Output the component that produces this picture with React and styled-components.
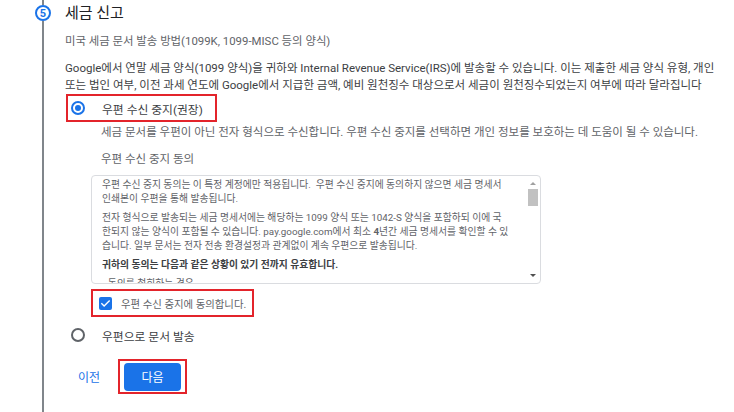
import styled, { createGlobalStyle } from "styled-components";

const GlobalStyle = createGlobalStyle`
  html, body {
    margin: 0;
    padding: 0;
    background: #ffffff;
  }
  body {
    font-family: Roboto, "Noto Sans CJK KR", sans-serif;
    color: #3c4043;
    overflow: hidden;
  }
`;

const Page = styled.div`
  display: flex;
  height: 412px;
`;

const Rail = styled.div`
  width: 16px;
  margin-left: 35px;
  display: flex;
  flex-direction: column;
  align-items: center;
`;

const RailLine = styled.div`
  width: 2px;
  background: #80868b;
  height: ${(p) => (p.$grow ? "auto" : "5px")};
  flex: ${(p) => (p.$grow ? 1 : "none")};
`;

const StepBadge = styled.div`
  width: 12px;
  height: 12px;
  border: 2px solid #1a73e8;
  border-radius: 50%;
  color: #1a73e8;
  font-size: 11px;
  font-weight: 700;
  display: flex;
  align-items: center;
  justify-content: center;
  line-height: 1;
`;

const Content = styled.div`
  margin-left: 14px;
  display: flex;
  flex-direction: column;
`;

const Title = styled.div`
  font-size: 15px;
  line-height: 20px;
  color: #202124;
  margin-top: 3px;
`;

const Subtitle = styled.div`
  font-size: 11.4px;
  line-height: 17px;
  color: #5f6368;
  margin-top: 10px;
`;

const Paragraph = styled.div`
  font-size: 11.5px;
  line-height: 17px;
  color: #3c4043;
  margin-top: 10px;
  white-space: nowrap;
`;

const OptionRow = styled.div`
  display: flex;
  align-items: center;
  width: fit-content;
  height: 24px;
  padding-right: 12px;
  margin-left: 1px;
  border: 2px solid ${(p) => (p.$marked ? "#e3242b" : "transparent")};
  margin-top: ${(p) => p.$top}px;
`;

const Radio = styled.span`
  box-sizing: border-box;
  width: 14px;
  height: 14px;
  border-radius: 50%;
  border: 2px solid ${(p) => (p.$on ? "#1a73e8" : "#5f6368")};
  margin-left: 3px;
  display: flex;
  align-items: center;
  justify-content: center;
  &::after {
    content: "";
    width: 6px;
    height: 6px;
    border-radius: 50%;
    background: ${(p) => (p.$on ? "#1a73e8" : "transparent")};
  }
`;

const OptionLabel = styled.span`
  font-size: 11.8px;
  color: #3c4043;
  margin-left: 17px;
`;

const Indented = styled.div`
  margin-left: 36px;
  display: flex;
  flex-direction: column;
`;

const Description = styled.div`
  font-size: 11.5px;
  line-height: 17px;
  color: #5f6368;
  margin-top: ${(p) => p.$top}px;
  white-space: nowrap;
`;

const ConsentBox = styled.div`
  margin-left: -10px;
  margin-top: 7px;
  width: 448px;
  height: 107px;
  border: 1px solid #dadce0;
  border-radius: 4px;
  display: flex;
  overflow: hidden;
`;

const ConsentText = styled.div`
  flex: 1;
  padding: 2px 10px 0 10px;
  font-size: 9.8px;
  line-height: 14px;
  color: #5f6368;
  overflow: hidden;
  white-space: nowrap;
`;

const ConsentPara = styled.p`
  margin: 0 0 5px 0;
  font-weight: ${(p) => (p.$bold ? 700 : 400)};
  color: ${(p) => (p.$bold ? "#3c4043" : "#5f6368")};
`;

const ScrollTrack = styled.div`
  width: 12px;
  margin: 3px 1px 2px 0;
  display: flex;
  flex-direction: column;
  align-items: center;
`;

const ScrollArrow = styled.div`
  width: 0;
  height: 0;
  border-left: 3px solid transparent;
  border-right: 3px solid transparent;
  ${(p) =>
    p.$up
      ? "border-bottom: 3px solid #a0a0a0; margin-top: 3px;"
      : "border-top: 3px solid #505050; margin-bottom: 4px;"}
`;

const ScrollThumb = styled.div`
  width: 10px;
  height: 17px;
  background: #c1c1c1;
  margin-top: 4px;
`;

const ScrollSpacer = styled.div`
  flex: 1;
`;

const CheckRow = styled.label`
  display: flex;
  align-items: center;
  width: fit-content;
  height: 24px;
  margin-left: -10px;
  margin-top: 5px;
  padding: 0 6px 0 6px;
  border: 2px solid #e3242b;
`;

const CheckBox = styled.span`
  width: 13px;
  height: 13px;
  border-radius: 2px;
  background: #1a73e8;
  display: flex;
  align-items: center;
  justify-content: center;
`;

const CheckLabel = styled.span`
  font-size: 10.4px;
  color: #5f6368;
  margin-left: 9px;
`;

const Actions = styled.div`
  display: flex;
  align-items: center;
  margin-top: 10px;
`;

const BackLink = styled.span`
  font-size: 12px;
  color: #1a73e8;
  margin-left: 13px;
`;

const Highlight = styled.div`
  border: 2px solid #e3242b;
  padding: 1.5px 4px;
  margin-left: 18px;
`;

const NextButton = styled.button`
  display: block;
  width: 57px;
  height: 28px;
  border: none;
  border-radius: 4px;
  background: #1a73e8;
  color: #ffffff;
  font-family: Roboto, "Noto Sans CJK KR", sans-serif;
  font-size: 12px;
  padding: 0;
  cursor: pointer;
`;

export default function App() {
  return (
    <>
      <GlobalStyle />
      <Page>
        <Rail>
          <RailLine />
          <StepBadge>5</StepBadge>
          <RailLine $grow />
        </Rail>
        <Content>
          <Title>세금 신고</Title>
          <Subtitle>미국 세금 문서 발송 방법(1099K, 1099-MISC 등의 양식)</Subtitle>
          <Paragraph>
            Google에서 연말 세금 양식(1099 양식)을 귀하와 Internal Revenue Service(IRS)에 발송할 수 있습니다. 이는 제출한 세금 양식 유형, 개인
            <br />
            또는 법인 여부, 이전 과세 연도에 Google에서 지급한 금액, 예비 원천징수 대상으로서 세금이 원천징수되었는지 여부에 따라 달라집니다
          </Paragraph>

          <OptionRow $marked $top={0}>
            <Radio $on />
            <OptionLabel>우편 수신 중지(권장)</OptionLabel>
          </OptionRow>

          <Indented>
            <Description $top={2}>
              세금 문서를 우편이 아닌 전자 형식으로 수신합니다. 우편 수신 중지를 선택하면 개인 정보를 보호하는 데 도움이 될 수 있습니다.
            </Description>
            <Description $top={10}>우편 수신 중지 동의</Description>

            <ConsentBox>
              <ConsentText>
                <ConsentPara>
                  우편 수신 중지 동의는 이 특정 계정에만 적용됩니다.&nbsp; 우편 수신 중지에 동의하지 않으면 세금 명세서
                  <br />
                  인쇄본이 우편을 통해 발송됩니다.
                </ConsentPara>
                <ConsentPara>
                  전자 형식으로 발송되는 세금 명세서에는 해당하는 1099 양식 또는 1042-S 양식을 포함하되 이에 국
                  <br />
                  한되지 않는 양식이 포함될 수 있습니다. pay.google.com에서 최소 <b>4</b>년간 세금 명세서를 확인할 수 있
                  <br />
                  습니다. 일부 문서는 전자 전송 환경설정과 관계없이 계속 우편으로 발송됩니다.
                </ConsentPara>
                <ConsentPara $bold>귀하의 동의는 다음과 같은 상황이 있기 전까지 유효합니다.</ConsentPara>
                <ConsentPara>• 동의를 철회하는 경우</ConsentPara>
              </ConsentText>
              <ScrollTrack>
                <ScrollArrow $up />
                <ScrollThumb />
                <ScrollSpacer />
                <ScrollArrow />
              </ScrollTrack>
            </ConsentBox>

            <CheckRow>
              <CheckBox>
                <svg width="11" height="11" viewBox="0 0 24 24" fill="none">
                  <path d="M4 12.5l5 5L20 6.5" stroke="#ffffff" strokeWidth="3" strokeLinecap="square" />
                </svg>
              </CheckBox>
              <CheckLabel>우편 수신 중지에 동의합니다.</CheckLabel>
            </CheckRow>
          </Indented>

          <OptionRow $top={4}>
            <Radio />
            <OptionLabel>우편으로 문서 발송</OptionLabel>
          </OptionRow>

          <Actions>
            <BackLink>이전</BackLink>
            <Highlight>
              <NextButton>다음</NextButton>
            </Highlight>
          </Actions>
        </Content>
      </Page>
    </>
  );
}
